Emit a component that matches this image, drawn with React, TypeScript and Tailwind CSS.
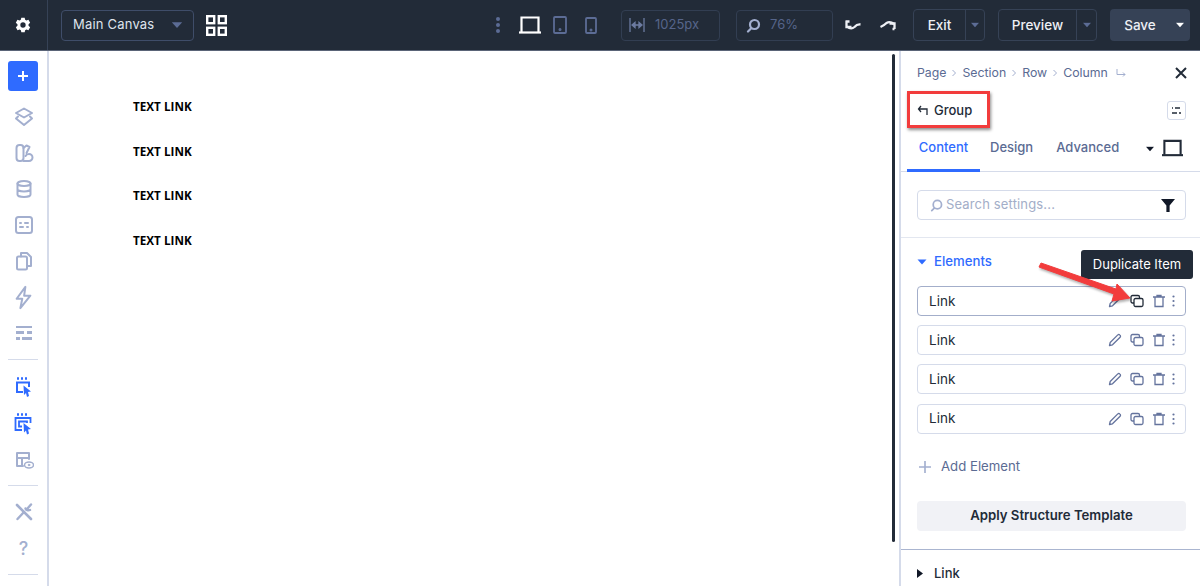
import React from "react";

const Caret = ({ className = "" }: { className?: string }) => (
  <svg width="10" height="6" viewBox="0 0 10 6" className={className}><path d="M0.5 0.5h9L5 5.5z" fill="currentColor" /></svg>
);

const stroke = { fill: "none", stroke: "currentColor", strokeWidth: 2, strokeLinecap: "round", strokeLinejoin: "round" } as const;

const Rail = ({ children, size = 20, className = "text-[#a3afcf]" }: { children: React.ReactNode; size?: number; className?: string }) => (
  <div className={`h-9 flex items-center justify-center ${className}`}>
    <svg width={size} height={size} viewBox="0 0 20 20" {...stroke}>{children}</svg>
  </div>
);

const RailLine = () => <div className="h-px bg-[#d5dbea] mx-2 w-[30px]" />;

const LinkRow = ({ active = false }: { active?: boolean }) => (
  <div className={`h-[30px] mb-[9.2px] rounded-[4px] border flex items-center pl-[11px] pr-[10px] ${active ? "border-[#a3aeca]" : "border-[#d5dbea]"}`}>
    <span className="text-[13.5px] text-[#222b38] flex-1">Link</span>
    <svg width="14" height="14" viewBox="0 0 14 14" className="text-[#64739d]" fill="none" stroke="currentColor" strokeWidth="1.3" strokeLinejoin="round"><path d="M1.5 12.5l.7-3L9.8 1.9a1.3 1.3 0 0 1 1.9 0l.4.4a1.3 1.3 0 0 1 0 1.9L4.5 11.8z" /></svg>
    <svg width="14" height="14" viewBox="0 0 14 14" className={`ml-[8px] ${active ? "text-[#222b38]" : "text-[#64739d]"}`} fill="none" stroke="currentColor" strokeWidth="1.3"><rect x="1" y="1.5" width="8.5" height="7.5" rx="1.5" /><rect x="4" y="4.5" width="9" height="8" rx="1.5" fill="#fff" /></svg>
    <svg width="14" height="14" viewBox="0 0 14 14" className="ml-[8px] text-[#64739d]" fill="none" stroke="currentColor" strokeWidth="1.3"><path d="M1 3h12M5 3V1.500h4V3M3 3v9.500h8V3" /></svg>
    <svg width="3" height="12" viewBox="0 0 3 12" className="ml-[6px] text-[#64739d]" fill="currentColor"><circle cx="1.5" cy="1.5" r="1.1" /><circle cx="1.5" cy="6" r="1.1" /><circle cx="1.5" cy="10.5" r="1.1" /></svg>
  </div>
);

const Sep = () => (
  <svg width="6" height="8" viewBox="0 0 6 8" className="mx-[5px] text-[#a3afcf]" fill="none" stroke="currentColor" strokeWidth="1"><path d="M1.5 1l3 3-3 3" /></svg>
);

export default function App() {
  return (
    <div className="w-[1200px] h-[586px] overflow-hidden bg-white flex flex-col font-['Inter','Liberation_Sans',sans-serif]">
      <header className="h-[51px] shrink-0 bg-[#222b38] border-b border-[#5a6477] flex items-center text-white">
        <div className="w-[48px] h-full shrink-0 border-r border-[#364256] flex items-center justify-center pr-[2px]">
          <svg width="16" height="16" viewBox="0 0 24 24" fill="#fff"><path fillRule="evenodd" d="M9.5 1h5l.7 3.200 1.900 1.100 3.100-1 2.500 4.300-2.400 2.200v2.400l2.400 2.200-2.500 4.300-3.100-1-1.900 1.100-.7 3.200h-5l-.7-3.200-1.900-1.100-3.100 1-2.500-4.300 2.400-2.200v-2.400L1.200 8.600l2.500-4.300 3.100 1 1.900-1.100zM12 8a4 4 0 1 0 0 8 4 4 0 0 0 0-8z" /></svg>
        </div>
        <div className="ml-[13px] w-[133px] h-[31px] rounded-[4px] border border-[#3f4d69] flex items-center pl-[11px] pr-[11px]">
          <span className="text-[13px] text-[#dfe3ec] flex-1 tracking-[0.2px]">Main Canvas</span>
          <Caret className="text-[#5c6c95] scale-[1.15]" />
        </div>
        <svg width="21" height="21" viewBox="0 0 21 21" className="ml-[12px]" fill="none" stroke="#fff" strokeWidth="2.4"><rect x="1.200" y="1.200" width="7" height="7" /><rect x="12.800" y="1.200" width="7" height="7" /><rect x="1.200" y="12.800" width="7" height="7" /><rect x="12.800" y="12.800" width="7" height="7" /></svg>

        <svg width="6" height="18" viewBox="0 0 6 18" className="ml-[268px] text-[#5c6c95]" fill="currentColor"><circle cx="3" cy="3" r="2" /><circle cx="3" cy="9" r="2" /><circle cx="3" cy="15" r="2" /></svg>
        <svg width="22" height="18" viewBox="0 0 22 18" className="ml-[18px]" fill="none" stroke="#fff" strokeWidth="2.2"><path d="M2.500 16V1.500h17V16" /><path d="M0 16.500h22" /></svg>
        <svg width="14" height="18" viewBox="0 0 14 18" className="ml-[12px] text-[#5c6c95]" fill="none" stroke="currentColor" strokeWidth="1.800"><rect x="1" y="1" width="12" height="16" rx="1" /><circle cx="7" cy="13.500" r=".6" fill="currentColor" /></svg>
        <svg width="12" height="17" viewBox="0 0 12 17" className="ml-[18px] text-[#5c6c95]" fill="none" stroke="currentColor" strokeWidth="1.800"><rect x="1" y="1" width="10" height="15" rx="1" /><circle cx="6" cy="13" r=".6" fill="currentColor" /></svg>

        <div className="ml-[24px] w-[99px] h-[31px] rounded-[4px] border border-[#323e52] flex items-center pl-[7px]">
          <svg width="16" height="16" viewBox="0 0 16 16" className="text-[#6c7ba0]" fill="none" stroke="currentColor" strokeWidth="1.300"><path d="M1 1v14M15 1v14" /><path d="M3 8h10" strokeWidth="1.600" /><path d="M3 8l3-2.500v5zM13 8l-3-2.500v5z" fill="currentColor" /></svg>
          <span className="ml-[10px] text-[13px] text-[#56658a]">1025px</span>
        </div>
        <div className="ml-[16px] w-[97px] h-[31px] rounded-[4px] border border-[#323e52] flex items-center pl-[9px]">
          <svg width="15" height="15" viewBox="0 0 15 15" className="text-[#a3afcf]" fill="none" stroke="currentColor" strokeWidth="2.200" strokeLinecap="round"><circle cx="8.500" cy="6.500" r="4.500" /><path d="M5 10.500l-3 3" /></svg>
          <span className="ml-[9px] text-[13px] text-[#56658a]">76%</span>
        </div>
        <svg width="16" height="11" viewBox="0 0 16 11" className="ml-[12px]" fill="none" stroke="#eef0f5" strokeWidth="2.300"><path d="M.5 1.500h4M1.500 1v6h5" /><path d="M2 6.500Q6 10 9.500 7Q12 4 15.500 4.500" /></svg>
        <svg width="16" height="11" viewBox="0 0 16 11" className="ml-[19px]" fill="none" stroke="#eef0f5" strokeWidth="2.300"><path d="M14.500 9V3.500h-5M14.500 9h-2" /><path d="M14 4Q10 1 6.500 3Q4 5.500 .5 7" /></svg>

        <div className="ml-[17px] w-[72px] h-[32px] rounded-[4px] border border-[#364256] flex items-center">
          <span className="w-[51px] text-center text-[13.5px] font-medium text-[#eef0f5]">Exit</span>
          <span className="flex-1 h-full border-l border-[#364256] flex items-center justify-center"><Caret className="text-[#5c6c95] scale-90" /></span>
        </div>
        <div className="ml-[13px] w-[99px] h-[32px] rounded-[4px] border border-[#364256] flex items-center">
          <span className="w-[77px] text-center text-[13.5px] font-medium text-[#eef0f5]">Preview</span>
          <span className="flex-1 h-full border-l border-[#364256] flex items-center justify-center"><Caret className="text-[#5c6c95] scale-90" /></span>
        </div>
        <div className="ml-[13px] w-[80px] h-[32px] rounded-[4px] bg-[#364256] flex items-center">
          <span className="w-[60px] text-center text-[13.5px] font-medium text-[#eef0f5]">Save</span>
          <Caret className="ml-[5px] text-white scale-90" />
        </div>
      </header>

      <div className="flex-1 flex min-h-0 relative">
        <aside className="w-[49px] shrink-0 border-r-2 border-[#d5dbea] flex flex-col items-stretch pt-[10px]">
          <div className="ml-[8px] w-[30px] h-[30px] mb-[8px] rounded-[3px] bg-[#2f6bff] flex items-center justify-center">
            <svg width="12" height="12" viewBox="0 0 12 12" stroke="#fff" strokeWidth="2"><path d="M6 1v10M1 6h10" /></svg>
          </div>
          <Rail><path d="M10 1.500l8 4.500-8 4.500L2 6z" /><path d="M4 9.500L2 11.500l8 6.500 8-6.500-2-2" /></Rail>
          <Rail><rect x="2.500" y="2" width="7" height="16" rx="3" /><path d="M9.500 5l3-2.500 3 1.500-3 6" /><path d="M9.500 18h5.500a3.500 3.500 0 0 0 0-7c-2 0-3 1-3.500 2" /></Rail>
          <Rail><ellipse cx="10" cy="4.500" rx="6.500" ry="2.500" /><path d="M3.500 4.500v11c0 1.400 3 2.500 6.500 2.500s6.500-1.100 6.500-2.500v-11M3.500 10c0 1.400 3 2.500 6.500 2.500s6.500-1.100 6.500-2.500" /></Rail>
          <Rail><rect x="2" y="2" width="16" height="16" rx="2.500" /><path d="M6 8h1M11 8h3M6 12h3M13 12h1" /></Rail>
          <Rail><path d="M7 5.500V2h6l4 4v9h-4" /><rect x="3" y="5.500" width="10" height="13" rx="1.500" /></Rail>
          <Rail size={25}><path d="M11.500 1.500L4.500 11h4.500L7.500 18.500 15.500 8.500h-5z" strokeWidth="1.600" /></Rail>
          <div className="h-9 flex flex-col items-center justify-center gap-[3px]">
            <div className="w-[16px] h-[2.500px] bg-[#a3afcf]" />
            <div className="w-[16px] h-[3px] flex justify-between"><div className="w-[8px] bg-[#a3afcf]" /><div className="w-[5px] bg-[#a3afcf]" /></div>
            <div className="w-[16px] h-[3px] flex justify-between"><div className="w-[4px] bg-[#a3afcf]" /><div className="w-[10px] bg-[#a3afcf]" /></div>
          </div>
          <div className="mt-[8px] mb-[10px]"><RailLine /></div>
          <div className="h-9 flex items-center justify-center text-[#2f6bff]">
            <svg width="20" height="22" viewBox="0 0 20 22" fill="none" stroke="currentColor" strokeWidth="2"><path d="M3 1.500h2M7 1.500h2M11 1.500h2" strokeWidth="2.400" /><path d="M9 15H3V5.500h12V10" /><path d="M9.500 8.500l7.500 6-3 .6 1 4-2 .8-1-3.800-2 2z" fill="currentColor" stroke="none" /></svg>
          </div>
          <div className="h-9 flex items-center justify-center text-[#2f6bff]">
            <svg width="20" height="23" viewBox="0 0 20 23" fill="none" stroke="currentColor" strokeWidth="1.800"><path d="M3 1.500h2M7 1.500h2M11 1.500h2" strokeWidth="2.400" /><path d="M8 17H1.500V5h15v5" /><path d="M8 13.500H5V8.500h8V10" /><path d="M9.500 10l7.500 6-3 .6 1 4-2 .8-1-3.800-2 2z" fill="currentColor" stroke="none" /></svg>
          </div>
          <Rail><path d="M9 16H3V3h12v6" /><path d="M3 8h12M8 8v8" /><ellipse cx="15" cy="15" rx="4.500" ry="3" strokeWidth="1.500" /><circle cx="15" cy="15" r=".8" fill="currentColor" strokeWidth="1" /></Rail>
          <div className="mt-[7px] mb-[8px]"><RailLine /></div>
          <Rail><path d="M3 3l14 14" strokeWidth="2.600" /><path d="M13.500 6.500L17 2.500M16 8c-2 .8-4 0-4.500-1.500M10 10l-6.500 7" strokeWidth="2.400" /></Rail>
          <div className="h-9 flex items-center justify-center text-[18px] font-medium text-[#a3afcf]">?</div>
          <div className="mt-[8px]"><RailLine /></div>
        </aside>

        <main className="flex-1 relative pl-[84px] pt-[47px]">
          {[0, 1, 2, 3].map((i) => (
            <div key={i} className="h-[44.500px] text-[11.7px] leading-[16px] font-bold text-black font-['Open_Sans',sans-serif]">TEXT LINK</div>
          ))}
          <div className="absolute left-[843px] top-[3px] w-[3px] h-[488px] rounded-full bg-[#222b38]" />
        </main>

        <aside className="w-[301px] shrink-0 border-l-2 border-[#d5dbea] flex flex-col relative">
          <div className="h-[44px] shrink-0 flex items-center pl-[16px] text-[12.3px] text-[#5b6b93]">
            <span>Page</span><Sep /><span>Section</span><Sep /><span>Row</span><Sep /><span>Column</span>
            <svg width="10" height="10" viewBox="0 0 10 10" className="ml-[8px] text-[#a3afcf]" fill="none" stroke="currentColor" strokeWidth="1"><path d="M1 1v5.500h8M7 4.500l2 2-2 2" /></svg>
            <svg width="12" height="12" viewBox="0 0 12 12" className="ml-auto mr-[13px]" fill="none" stroke="#222b38" strokeWidth="2"><path d="M1 1l10 10M11 1L1 11" /></svg>
          </div>
          <div className="h-[31px] shrink-0 flex items-center pl-[16px]">
            <svg width="11" height="11" viewBox="0 0 11 11" fill="none" stroke="#222b38" strokeWidth="1.300"><path d="M10 10V4H2M4 1L1.500 4 4 7" /></svg>
            <span className="ml-[6px] text-[13px] font-medium text-[#222b38]">Group</span>
            <div className="ml-auto mr-[14px] w-[19px] h-[19px] rounded-[3px] border border-[#d5dbea] flex items-center justify-center">
              <svg width="11" height="9" viewBox="0 0 11 9" stroke="#222b38" strokeWidth="1.500"><path d="M4 2h5M1 2h1M1 7h5M8 7h2" /></svg>
            </div>
          </div>
          <div className="h-[46px] shrink-0 flex items-stretch border-b border-[#d5dbea] px-[6px] text-[13px] font-medium relative">
            <div className="w-[73px] flex items-center justify-center text-[#2f6bff] border-b-[3px] border-[#2f6bff] -mb-px">Content</div>
            <div className="ml-[10px] flex items-center text-[#5b6b93] pb-[2px]">Design</div>
            <div className="ml-[23px] flex items-center text-[#5b6b93] pb-[2px]">Advanced</div>
            <Caret className="ml-[26px] mt-[20px] scale-90 text-[#111827]" />
            <svg width="21" height="18" viewBox="0 0 22 18" className="ml-[7px] mt-[13px]" fill="none" stroke="#222b38" strokeWidth="2.200"><path d="M2.500 16V1.500h17V16" /><path d="M0 16.500h22" /></svg>
          </div>
          <div className="h-[66px] border-b border-[#e3e7f0] pl-[16px] pr-[14px] pt-[18px] shrink-0">
            <div className="h-[30px] rounded-[4px] border border-[#d5dbea] flex items-center pl-[12px] pr-[10px]">
              <svg width="13" height="13" viewBox="0 0 15 15" className="text-[#a3afcf]" fill="none" stroke="currentColor" strokeWidth="2" strokeLinecap="round"><circle cx="8.500" cy="6.500" r="4.800" /><path d="M5 10.500l-3 3" /></svg>
              <span className="ml-[3px] text-[13px] text-[#a3aec8] flex-1 tracking-[0.15px]">Search settings...</span>
              <svg width="14" height="13" viewBox="0 0 13 12" fill="#111827"><path d="M0 0h13L8 6v6H5V6z" /></svg>
            </div>
          </div>
          <div className="pl-[16px] pr-[14px] shrink-0">
            <div className="h-[48px] flex items-center pb-[1px]">
              <Caret className="text-[#2f6bff]" />
              <span className="ml-[7px] text-[13.2px] font-medium text-[#2f6bff]">Elements</span>
            </div>
            <LinkRow active />
            <LinkRow />
            <LinkRow />
            <LinkRow />
            <div className="h-[49px] mt-[4px] flex items-center pl-[2px]">
              <svg width="12" height="12" viewBox="0 0 11 11" stroke="#a3afcf" strokeWidth="1.500"><path d="M5.500 0v11M0 5.500h11" /></svg>
              <span className="ml-[10px] text-[13.2px] text-[#5b6b93]">Add Element</span>
            </div>
            <div className="mt-[9px] h-[30px] rounded-[4px] bg-[#f1f2f6] flex items-center justify-center text-[13.2px] font-semibold text-[#222b38]">Apply Structure Template</div>
          </div>
          <div className="mt-[18px] border-t border-[#aab5d0] h-[38px] pl-[16px] flex items-center pt-[11px] shrink-0">
            <svg width="6" height="9" viewBox="0 0 6 9" fill="#111827"><path d="M0 0l6 4.500L0 9z" /></svg>
            <span className="ml-[11px] text-[13px] font-medium text-[#222b38]">Link</span>
          </div>

          <div className="absolute left-[180px] top-[199px] w-[112px] h-[29px] rounded-[3px] bg-[#222b38] flex items-center justify-center text-[13px] text-white">Duplicate Item</div>
        </aside>

        <div className="absolute left-[907px] top-[40px] w-[83px] h-[37px] border-[3.500px] border-[#f23c3c] shadow-[1px_2px_3px_rgba(0,0,0,0.45)]" />
        <svg className="absolute left-[1035px] top-[211px] [filter:drop-shadow(1px_2px_1px_rgba(0,0,0,0.3))]" width="100" height="45" viewBox="0 0 100 45"><path d="M4 5L6 1L81 27L82 22L95 36L77 39L79 32Z" fill="#f23c3c" stroke="#f23c3c" strokeWidth="1" strokeLinejoin="round" /></svg>
      </div>
    </div>
  );
}
